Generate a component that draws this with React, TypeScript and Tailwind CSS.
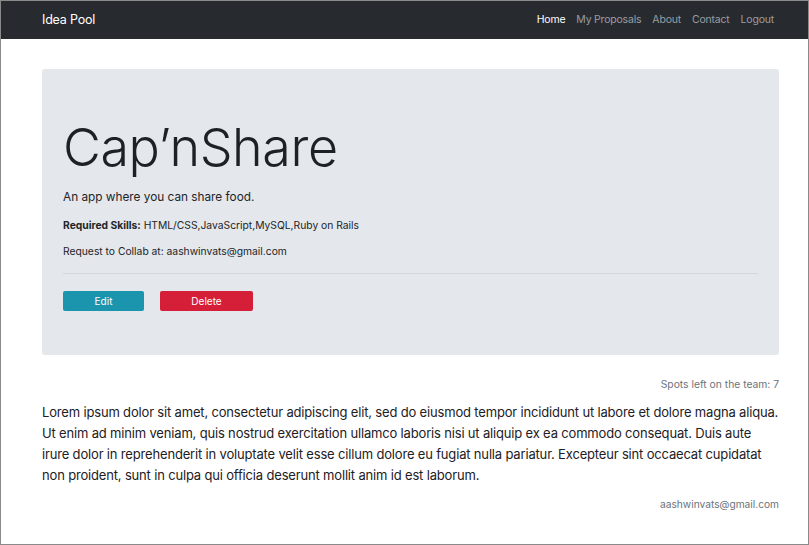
export default function App() {
  return (
    <div
      className="w-[809px] h-[545px] border border-[#8a8a8a] bg-white text-[#212529] overflow-hidden"
      style={{ fontFamily: 'Inter, "Noto Sans", sans-serif' }}
    >
      <nav className="h-[38px] bg-[#272b2f] flex items-center justify-between pl-[41px] pr-[34px]">
        <span className="text-white text-[12.5px] tracking-[-0.2px]">Idea Pool</span>
        <div className="flex items-center gap-[11px] text-[10.5px] tracking-[-0.2px]">
          <a className="text-white">Home</a>
          <a className="text-[#9a9da1]">My Proposals</a>
          <a className="text-[#9a9da1]">About</a>
          <a className="text-[#9a9da1]">Contact</a>
          <a className="text-[#9a9da1]">Logout</a>
        </div>
      </nav>

      <main className="pl-[41px] pr-[29px] pt-[30px]">
        <section className="bg-[#e4e7eb] rounded-[3px] h-[286px] px-[21px] pt-[49px]">
          <h1 className="text-[52px] font-light leading-[60px] tracking-[-0.4px] text-[#1d2024]">
            Cap’nShare
          </h1>
          <p className="mt-[10px] text-[11.8px] leading-[19px]">An app where you can share food.</p>
          <p className="mt-[10px] text-[10.3px] leading-[16px]">
            <span className="font-bold">Required Skills:</span> HTML/CSS,JavaScript,MySQL,Ruby on Rails
          </p>
          <p className="mt-[10px] text-[10.3px] leading-[16px]">Request to Collab at: aashwinvats@gmail.com</p>
          <hr className="mt-[14px] border-t border-[#d3d6da]" />
          <div className="mt-[17px] flex gap-[16px]">
            <button className="w-[81px] h-[20px] rounded-[2px] bg-[#1b94ad] text-white text-[10px]">Edit</button>
            <button className="w-[93px] h-[20px] rounded-[2px] bg-[#d51f38] text-white text-[10px]">Delete</button>
          </div>
        </section>

        <p className="mt-[22px] text-right text-[10.3px] text-[#6c737a]">Spots left on the team: 7</p>
        <p className="mt-[10px] text-[13px] leading-[21px] tracking-[-0.17px] text-[#1d2024]">
          Lorem ipsum dolor sit amet, consectetur adipiscing elit, sed do eiusmod tempor incididunt ut labore et dolore magna aliqua. Ut enim ad minim veniam, quis nostrud exercitation ullamco laboris nisi ut aliquip ex ea commodo consequat. Duis aute irure dolor in reprehenderit in voluptate velit esse cillum dolore eu fugiat nulla pariatur. Excepteur sint occaecat cupidatat non proident, sunt in culpa qui officia deserunt mollit anim id est laborum.
        </p>
        <p className="mt-[11px] text-right text-[10.2px] text-[#6c737a]">aashwinvats@gmail.com</p>
      </main>
    </div>
  );
}
